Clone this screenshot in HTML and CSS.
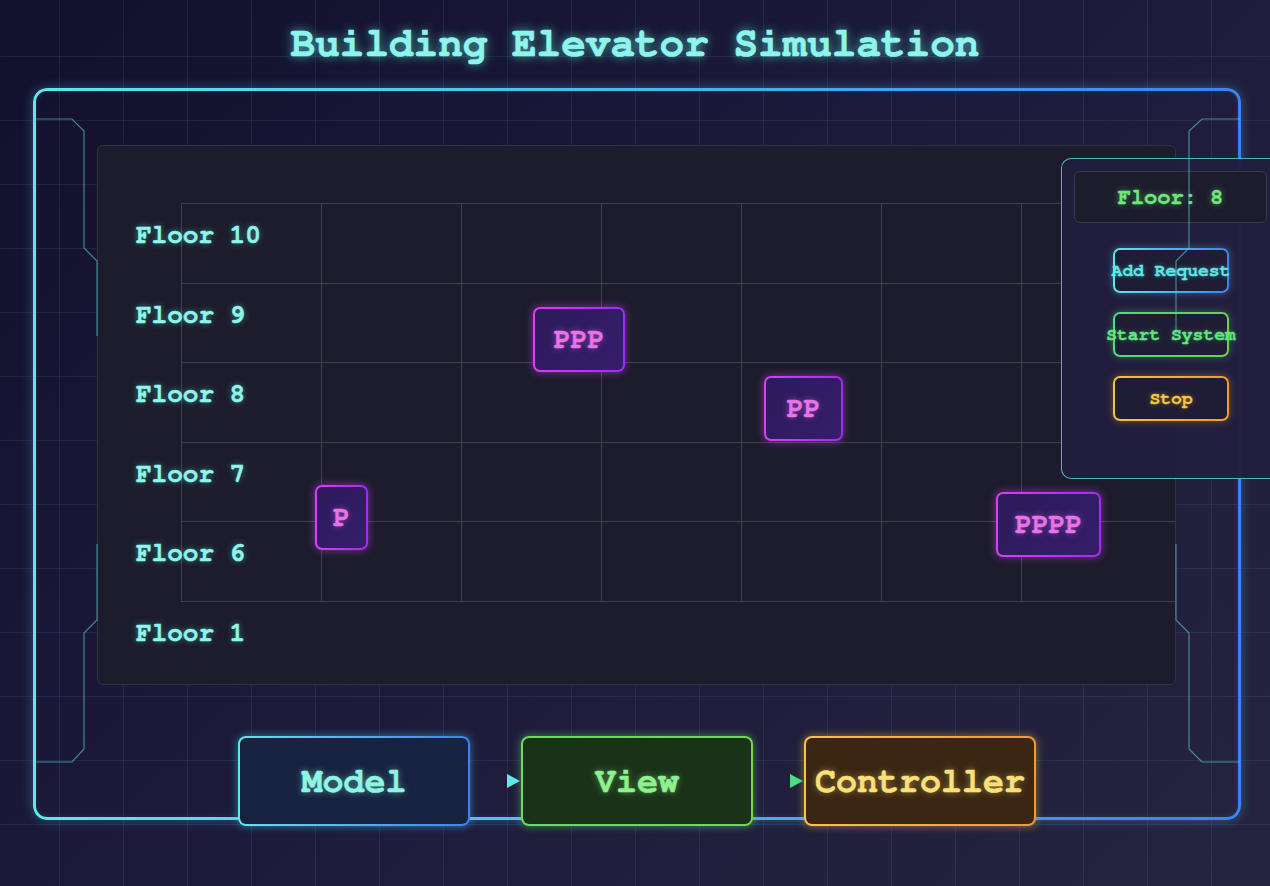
FILE: index.html
```html
<!DOCTYPE html>
<html lang="en">
<head>
<meta charset="utf-8">
<title>Building Elevator Simulation</title>
<link rel="stylesheet" href="styles.css">
</head>
<body>
  <h1 class="title">Building Elevator Simulation</h1>
  <div class="frame">
    <div class="building">
      <ul class="floor-labels">
        <li>Floor 10</li>
        <li>Floor 9</li>
        <li>Floor 8</li>
        <li>Floor 7</li>
        <li>Floor 6</li>
        <li>Floor 1</li>
      </ul>
      <div class="shaft-grid">
        <div class="passenger p1">P</div>
        <div class="passenger p3">PPP</div>
        <div class="passenger p2">PP</div>
        <div class="passenger p4">PPPP</div>
      </div>
    </div>

    <div class="control-panel">
      <div class="floor-display">Floor: 8</div>
      <button class="ctl-btn btn-add">Add Request</button>
      <button class="ctl-btn btn-start">Start System</button>
      <button class="ctl-btn btn-stop">Stop</button>
    </div>

    <div class="mvc-row">
      <div class="mvc-box model">Model</div>
      <div class="mvc-box view">View</div>
      <div class="mvc-box controller">Controller</div>
    </div>

    <svg class="brackets" width="1208" height="732" viewBox="0 0 1208 732">
      <polyline points="2,31 39,31 51,43 51,160 64,173 64,248"/>
      <polyline points="64,456 64,532 51,545 51,661 39,674 2,674"/>
      <polyline points="1207,31 1169,31 1156,43 1156,160 1143,173 1143,248"/>
      <polyline points="1143,456 1143,532 1156,545 1156,661 1169,674 1207,674"/>
    </svg>
  </div>
</body>
</html>
```

FILE: styles.css
```css
html, body {
  margin: 0;
  padding: 0;
}

body {
  width: 1270px;
  height: 886px;
  overflow: hidden;
  font-family: "FreeMono", "Courier New", "Liberation Mono", monospace;
  background:
    linear-gradient(rgba(80, 165, 200, 0.12) 1px, transparent 1px) 0 56px / 64px 64px,
    linear-gradient(90deg, rgba(80, 165, 200, 0.12) 1px, transparent 1px) 59px 0 / 64px 64px,
    linear-gradient(135deg, #12102c 0%, #1d1b3a 50%, #25243f 100%);
}

.title {
  margin: 0;
  padding-top: 20px;
  height: 48px;
  line-height: 48px;
  font-size: 41px;
  font-weight: bold;
  text-align: center;
  color: #8ff5ec;
  -webkit-text-stroke: 0.7px #8ff5ec;
  text-shadow: 0 0 8px rgba(94, 234, 220, 0.6), 0 0 16px rgba(94, 234, 220, 0.3);
}

/* ---------- outer frame ---------- */
.frame {
  position: relative;
  box-sizing: border-box;
  margin: 20px 0 0 33px;
  width: 1208px;
  height: 732px;
  border-radius: 14px;
  box-shadow: 0 0 12px rgba(80, 180, 240, 0.4), inset 0 0 10px rgba(80, 180, 240, 0.25);
  display: flex;
  flex-direction: column;
}

.frame::before {
  content: "";
  position: absolute;
  inset: 0;
  padding: 3px;
  border-radius: 14px;
  background: linear-gradient(90deg, #5ee8e8, #3b82f6);
  -webkit-mask: linear-gradient(#000 0 0) content-box, linear-gradient(#000 0 0);
  -webkit-mask-composite: xor;
  mask: linear-gradient(#000 0 0) content-box exclude, linear-gradient(#000 0 0);
}

/* ---------- building panel ---------- */
.building {
  position: relative;
  flex-shrink: 0;
  box-sizing: border-box;
  margin: 57px 0 0 64px;
  width: 1079px;
  height: 540px;
  padding: 50px 0 0 38px;
  background: #1c1c2c;
  border: 1px solid #33333f;
  border-radius: 6px;
}

.floor-labels {
  position: relative;
  z-index: 2;
  list-style: none;
  margin: 0;
  padding: 0;
}

.floor-labels li {
  height: 79.5px;
  line-height: 79.5px;
  font-size: 26px;
  font-weight: bold;
  color: #8ff5ec;
  -webkit-text-stroke: 0.5px #8ff5ec;
  text-shadow: 0 0 6px rgba(94, 234, 220, 0.55);
}

.shaft-grid {
  position: absolute;
  left: 83px;
  top: 57px;
  right: 0;
  height: 399px;
  background-image:
    repeating-linear-gradient(#40404a 0 1px, transparent 1px 79.6px),
    repeating-linear-gradient(90deg, #40404a 0 1px, transparent 1px 140px);
  background-size: 100% 100%, 841px 100%;
  background-repeat: no-repeat;
}

.passenger {
  position: absolute;
  box-sizing: border-box;
  height: 65px;
  display: flex;
  align-items: center;
  justify-content: center;
  border: 2.5px solid transparent;
  border-radius: 7px;
  background:
    linear-gradient(135deg, #2c1b5a, #361d6c) padding-box,
    linear-gradient(90deg, #dc3ff0, #a02cf2) border-box;
  box-shadow: 0 0 9px rgba(200, 60, 240, 0.6);
  font-size: 28px;
  font-weight: bold;
  color: #e872e8;
  -webkit-text-stroke: 0.5px #e872e8;
  text-shadow: 0 0 6px rgba(232, 114, 232, 0.5);
  z-index: 3;
}

.p1 { left: 134px; top: 282px; width: 53px; }
.p3 { left: 352px; top: 104px; width: 92px; }
.p2 { left: 583px; top: 173px; width: 79px; }
.p4 { left: 815px; top: 289px; width: 105px; }

/* ---------- control panel ---------- */
.control-panel {
  position: absolute;
  z-index: 4;
  left: 1028px;
  top: 70px;
  box-sizing: border-box;
  width: 220px;
  height: 321px;
  padding: 12px 12px 0 12px;
  background: rgba(34, 31, 62, 0.97);
  border: 1px solid rgba(94, 234, 230, 0.75);
  border-radius: 10px;
  display: flex;
  flex-direction: column;
  align-items: center;
}

.floor-display {
  box-sizing: border-box;
  align-self: stretch;
  width: 193px;
  height: 52px;
  display: flex;
  align-items: center;
  justify-content: center;
  background: #1c1c2c;
  border: 1px solid #3a3a46;
  border-radius: 6px;
  font-size: 22px;
  font-weight: bold;
  color: #6ee87a;
  -webkit-text-stroke: 0.4px #6ee87a;
  text-shadow: 0 0 6px rgba(110, 232, 122, 0.6);
}

.ctl-btn {
  box-sizing: border-box;
  width: 116px;
  height: 45px;
  margin-top: 19px;
  padding: 0;
  display: flex;
  align-items: center;
  justify-content: center;
  white-space: nowrap;
  font-family: inherit;
  font-size: 18px;
  font-weight: bold;
  border: 2px solid transparent;
  border-radius: 7px;
  -webkit-text-stroke: 0.3px currentColor;
}

.btn-add {
  margin-top: 25px;
  color: #5ee8e8;
  background:
    linear-gradient(#1f1d35, #1f1d35) padding-box,
    linear-gradient(90deg, #5ee8e8, #3b82f6) border-box;
  box-shadow: 0 0 7px rgba(94, 200, 240, 0.4);
  text-shadow: 0 0 5px rgba(94, 234, 232, 0.5);
}

.btn-start {
  color: #5ee87e;
  background:
    linear-gradient(#1f1d35, #1f1d35) padding-box,
    linear-gradient(90deg, #4ade80, #6bd14a) border-box;
  box-shadow: 0 0 7px rgba(90, 220, 110, 0.4);
  text-shadow: 0 0 5px rgba(94, 232, 126, 0.5);
}

.btn-stop {
  color: #f8c73a;
  background:
    linear-gradient(#1f1d35, #1f1d35) padding-box,
    linear-gradient(90deg, #f6c23a, #f39a2e) border-box;
  box-shadow: 0 0 7px rgba(245, 170, 50, 0.4);
  text-shadow: 0 0 5px rgba(248, 199, 58, 0.5);
}

/* ---------- MVC row ---------- */
.mvc-row {
  position: relative;
  flex-shrink: 0;
  z-index: 2;
  margin-top: 51px;
  display: flex;
  justify-content: center;
  gap: 51px;
}

.mvc-box {
  position: relative;
  box-sizing: border-box;
  width: 232px;
  height: 90px;
  display: flex;
  align-items: center;
  justify-content: center;
  border: 2.5px solid transparent;
  border-radius: 8px;
  font-size: 35px;
  font-weight: bold;
  white-space: nowrap;
  -webkit-text-stroke: 0.6px currentColor;
}

.model {
  color: #8ff5e2;
  background:
    linear-gradient(#172340, #172340) padding-box,
    linear-gradient(90deg, #5ee8e8, #3b82f6) border-box;
  box-shadow: 0 0 9px rgba(80, 190, 240, 0.55);
  text-shadow: 0 0 7px rgba(143, 245, 226, 0.55);
}

.view {
  color: #8ef08e;
  background:
    linear-gradient(#1a3218, #1a3218) padding-box,
    linear-gradient(90deg, #62e05a, #72d848) border-box;
  box-shadow: 0 0 9px rgba(100, 220, 90, 0.55);
  text-shadow: 0 0 7px rgba(142, 240, 142, 0.55);
}

.controller {
  color: #fbe07a;
  background:
    linear-gradient(#3a2612, #3a2612) padding-box,
    linear-gradient(90deg, #f8c63a, #f3992e) border-box;
  box-shadow: 0 0 9px rgba(245, 180, 50, 0.55);
  text-shadow: 0 0 7px rgba(251, 224, 122, 0.55);
}

.view::before,
.controller::before {
  content: "";
  position: absolute;
  left: -16px;
  top: 50%;
  transform: translateY(-50%);
  width: 0;
  height: 0;
  border-top: 7px solid transparent;
  border-bottom: 7px solid transparent;
  border-left: 13px solid #5ee8e8;
}

.controller::before {
  border-left-color: #4ade80;
}

/* ---------- decorative brackets ---------- */
.brackets {
  position: absolute;
  left: 0;
  top: 0;
  z-index: 5;
  overflow: visible;
  pointer-events: none;
}

.brackets polyline {
  fill: none;
  stroke: rgba(94, 210, 210, 0.6);
  stroke-width: 1.2;
}
```
